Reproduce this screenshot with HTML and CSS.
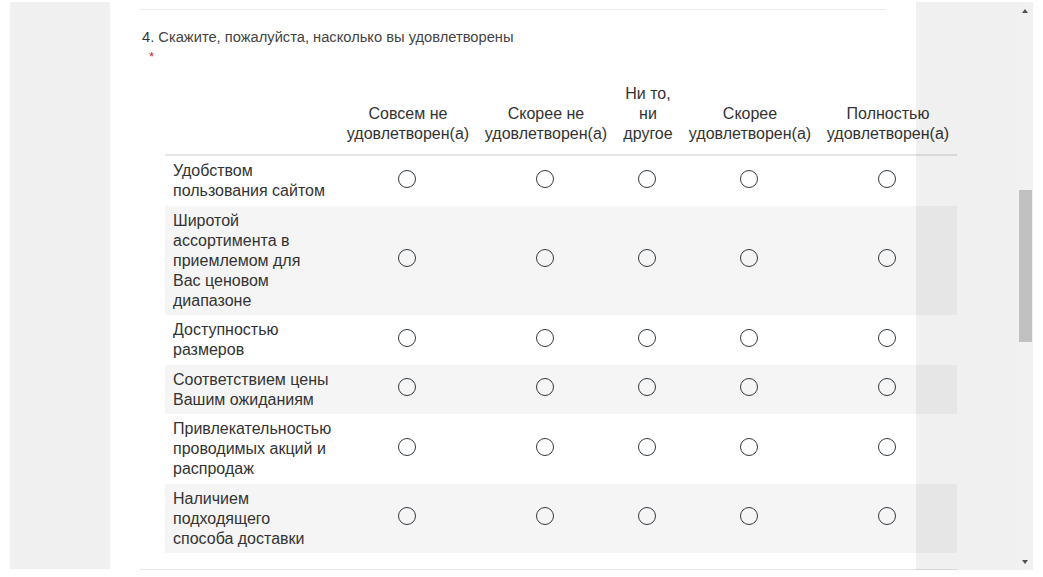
FILE: index.html
```html
<!DOCTYPE html>
<html lang="ru">
<head>
<meta charset="utf-8">
<title>Опрос</title>
<link rel="stylesheet" href="styles.css">
</head>
<body>
<div class="screen">
  <aside class="side-left"></aside>
  <main class="content">
    <div class="rule-top"></div>
    <div class="question"><span class="qnum">4</span>. Скажите, пожалуйста, насколько вы удовлетворены</div>
    <div class="required">*</div>
    <table class="matrix">
      <colgroup>
        <col class="c-label">
        <col class="c-wide">
        <col class="c-wide">
        <col class="c-narrow">
        <col class="c-wide">
        <col class="c-wide">
      </colgroup>
      <thead>
        <tr>
          <th class="h-empty"></th>
          <th>Совсем не удовлетворен(а)</th>
          <th>Скорее не удовлетворен(а)</th>
          <th>Ни то, ни другое</th>
          <th>Скорее удовлетворен(а)</th>
          <th>Полностью удовлетворен(а)</th>
        </tr>
      </thead>
      <tbody>
        <tr>
          <td class="label">Удобством пользования сайтом</td>
          <td><span class="radio"></span></td><td><span class="radio"></span></td><td><span class="radio"></span></td><td><span class="radio"></span></td><td><span class="radio"></span></td>
        </tr>
        <tr>
          <td class="label">Широтой ассортимента в приемлемом для Вас ценовом диапазоне</td>
          <td><span class="radio"></span></td><td><span class="radio"></span></td><td><span class="radio"></span></td><td><span class="radio"></span></td><td><span class="radio"></span></td>
        </tr>
        <tr>
          <td class="label">Доступностью размеров</td>
          <td><span class="radio"></span></td><td><span class="radio"></span></td><td><span class="radio"></span></td><td><span class="radio"></span></td><td><span class="radio"></span></td>
        </tr>
        <tr>
          <td class="label">Соответствием цены Вашим ожиданиям</td>
          <td><span class="radio"></span></td><td><span class="radio"></span></td><td><span class="radio"></span></td><td><span class="radio"></span></td><td><span class="radio"></span></td>
        </tr>
        <tr>
          <td class="label">Привлекательностью проводимых акций и распродаж</td>
          <td><span class="radio"></span></td><td><span class="radio"></span></td><td><span class="radio"></span></td><td><span class="radio"></span></td><td><span class="radio"></span></td>
        </tr>
        <tr>
          <td class="label">Наличием подходящего способа доставки</td>
          <td><span class="radio"></span></td><td><span class="radio"></span></td><td><span class="radio"></span></td><td><span class="radio"></span></td><td><span class="radio"></span></td>
        </tr>
      </tbody>
    </table>
    <div class="rule-bottom"></div>
  </main>
  <div class="overlay-right">
    <div class="scroll-track">
      <span class="arrow-up"></span>
      <span class="thumb"></span>
      <span class="arrow-down"></span>
    </div>
  </div>
</div>
</body>
</html>
```

FILE: styles.css
```css
html, body {
  margin: 0;
  padding: 0;
  background: #ffffff;
}

body {
  font-family: "Liberation Sans", Arial, sans-serif;
  color: #333333;
  width: 1043px;
  height: 577px;
  overflow: hidden;
}

.screen {
  position: relative;
  display: flex;
  align-items: flex-start;
  padding-top: 2px;
  height: 575px;
}

.side-left {
  flex: none;
  width: 100px;
  height: 567px;
  margin-left: 10px;
  background: #f0f0f0;
}

.content {
  flex: 1;
  padding-left: 30px;
}

.rule-top {
  margin-top: 7px;
  width: 746px;
  height: 1px;
  background: #ebebeb;
}

.question {
  margin-top: 17px;
  font-size: 14.7px;
  line-height: 20px;
  color: #444444;
  padding-left: 2px;
}

.qnum {
  color: #333333;
}

.required {
  margin-top: 2px;
  margin-left: 9px;
  font-size: 13px;
  line-height: 16px;
  color: #c0272d;
}

.matrix {
  margin-top: 14px;
  margin-left: 25px;
  width: 792px;
  table-layout: fixed;
  border-collapse: collapse;
  font-size: 16px;
  line-height: 20px;
  color: #333333;
}

.c-label { width: 174px; }
.c-wide { width: 138px; }
.c-narrow { width: 66px; }

.matrix th {
  font-weight: normal;
  text-align: center;
  vertical-align: bottom;
  padding: 5px 7px 10px;
  border-bottom: 2px solid #e6e6e6;
}

.matrix td {
  padding: 5px 9px 4.5px 7px;
  vertical-align: middle;
  text-align: center;
}

.matrix td.label {
  text-align: left;
  padding-left: 8px;
  padding-right: 8px;
}

.matrix tbody tr:nth-child(even) {
  background: #f5f5f5;
}

.radio {
  display: block;
  margin: -5px auto 0 auto;
  width: 18px;
  height: 18px;
  box-sizing: border-box;
  border: 1.5px solid #333a40;
  border-radius: 50%;
}

.rule-bottom {
  margin-top: 16px;
  width: 817px;
  height: 1px;
  background: #e6e6e6;
}

.overlay-right {
  position: absolute;
  left: 916px;
  top: 2px;
  width: 117px;
  height: 568px;
  background: rgba(0, 0, 0, 0.06);
}

.scroll-track {
  position: absolute;
  right: 0;
  top: 0;
  width: 16px;
  height: 100%;
  background: rgba(255, 255, 255, 0.08);
}

.thumb {
  position: absolute;
  left: 2px;
  top: 188px;
  width: 13px;
  height: 152px;
  background: #c1c1c1;
}

.arrow-up {
  position: absolute;
  left: 5px;
  top: 7px;
  width: 0;
  height: 0;
  border-left: 3.5px solid transparent;
  border-right: 3.5px solid transparent;
  border-bottom: 4px solid #505050;
}

.arrow-down {
  position: absolute;
  left: 5px;
  top: 558px;
  width: 0;
  height: 0;
  border-left: 3.5px solid transparent;
  border-right: 3.5px solid transparent;
  border-top: 4px solid #505050;
}
```
